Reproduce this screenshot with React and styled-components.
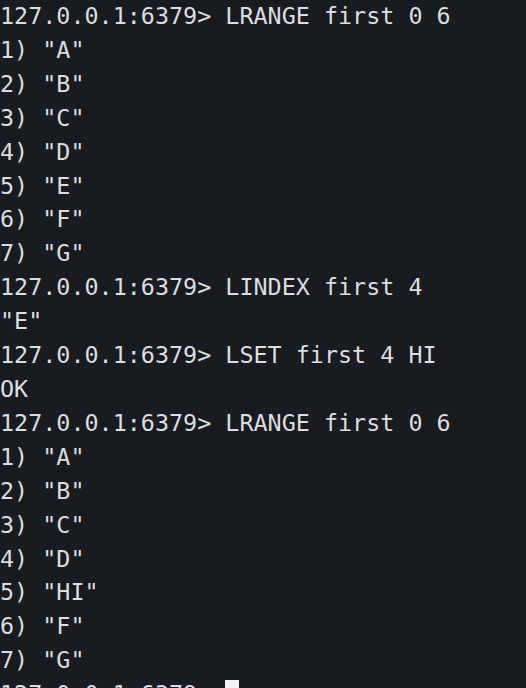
import * as React from "react";
import styled, { createGlobalStyle } from "styled-components";

const lines = [
  { prompt: true, text: "LRANGE first 0 6" },
  { text: '1) "A"' },
  { text: '2) "B"' },
  { text: '3) "C"' },
  { text: '4) "D"' },
  { text: '5) "E"' },
  { text: '6) "F"' },
  { text: '7) "G"' },
  { prompt: true, text: "LINDEX first 4" },
  { text: '"E"' },
  { prompt: true, text: "LSET first 4 HI" },
  { text: "OK" },
  { prompt: true, text: "LRANGE first 0 6" },
  { text: '1) "A"' },
  { text: '2) "B"' },
  { text: '3) "C"' },
  { text: '4) "D"' },
  { text: '5) "HI"' },
  { text: '6) "F"' },
  { text: '7) "G"' },
];

export default function App() {
  return (
    <>
      <GlobalStyle />
      <Terminal>
        {lines.map((line, i) => (
          <Line key={i}>
            {line.prompt && "127.0.0.1:6379> "}
            {line.text}
          </Line>
        ))}
        <Line>
          {"127.0.0.1:6379> "}
          <Cursor />
        </Line>
      </Terminal>
    </>
  );
}

const GlobalStyle = createGlobalStyle`
  html, body {
    margin: 0;
    padding: 0;
    background: #181b20;
    overflow: hidden;
  }
`;

const Terminal = styled.div`
  width: 526px;
  height: 688px;
  overflow: hidden;
  padding: 0;
  box-sizing: border-box;
  background: #181b20;
  color: #dcddde;
  font-family: "DejaVu Sans Mono", monospace;
  font-size: 23.4px;
  line-height: 33.9px;
`;

const Line = styled.div`
  white-space: pre;
`;

const Cursor = styled.span`
  display: inline-block;
  width: 14px;
  height: 28px;
  vertical-align: top;
  margin-top: 2px;
  background: #f2f2f2;
`;
